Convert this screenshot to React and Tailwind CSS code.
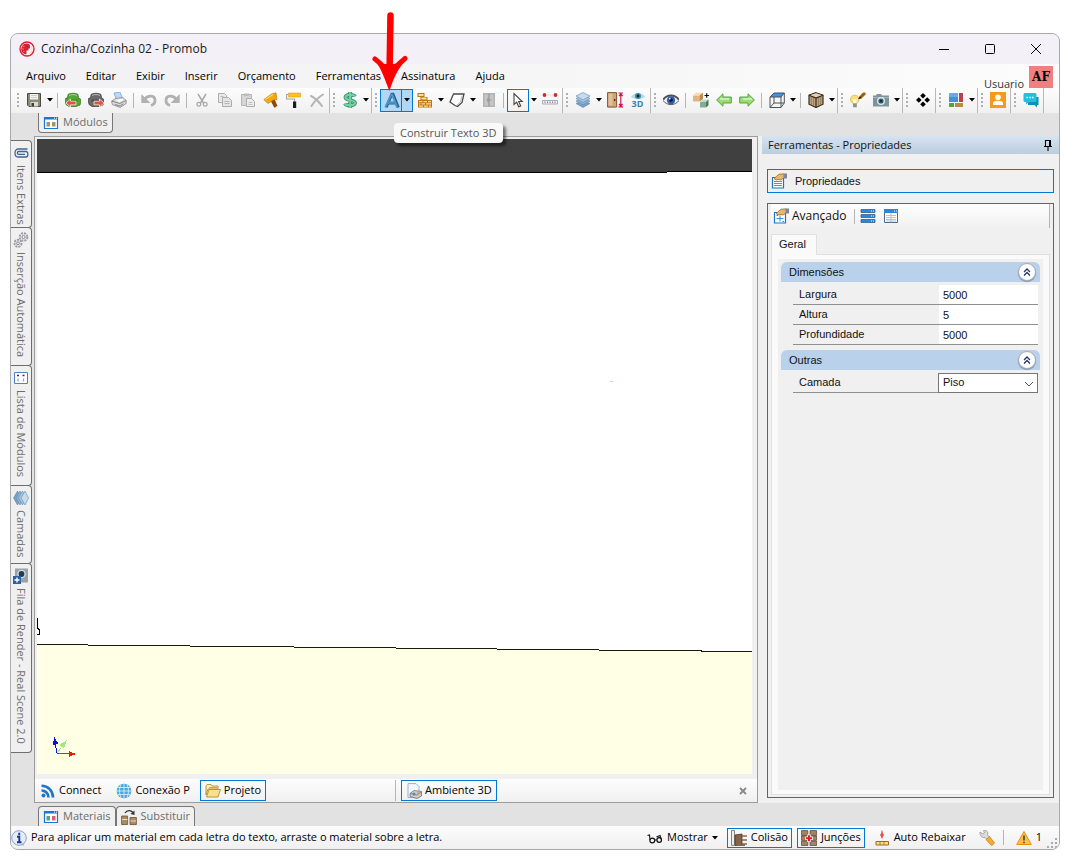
import React, { useState } from 'react'

const menus = ['Arquivo', 'Editar', 'Exibir', 'Inserir', 'Orçamento', 'Ferramentas', 'Assinatura', 'Ajuda']

/* ---------- icons ---------- */

function Svg({ children, box = '0 0 16 16', className = 'h-4 w-4' }) {
  return (
    <svg viewBox={box} className={`shrink-0 ${className}`} fill="none" aria-hidden="true">
      {children}
    </svg>
  )
}

const Caret = () => (
  <Svg box="0 0 6 4" className="h-[4px] w-[6px]">
    <path d="M0 0h6L3 3.6z" fill="#000" />
  </Svg>
)

const LogoIcon = () => (
  <Svg>
    <circle cx="8" cy="8" r="7" fill="#fff" stroke="#d9202e" strokeWidth="1.4" />
    <path d="M8 2.500A5.500 5.500 0 0 0 5.500 13l2 .5V9.500h2V7.500h1.500V4.500L10 3z" fill="#d9202e" />
    <path d="M3.500 5.500h2M3 8h2M4 10.500h1.500" stroke="#f5a5aa" strokeWidth=".7" />
    <path d="M12.500 5a6 6 0 0 1-3 8" stroke="#f3b5ba" strokeWidth=".8" />
  </Svg>
)

const SaveIcon = () => (
  <Svg>
    <path d="M1.500 1.500h13v13H3l-1.500-1.500z" fill="#8b8b78" stroke="#4a4a44" />
    <path d="M4 2h8v5.500H4z" fill="#f4f4f0" />
    <path d="M5 3.500h6M5 5.500h6" stroke="#c4c4bc" strokeWidth=".8" />
    <path d="M4.500 10h7.500v4.500H4.500z" fill="#d9d9cf" />
    <path d="M5.500 11h2.500v3.500H5.500z" fill="#3f3f3a" />
  </Svg>
)

function ChairIcon({ body, dark, flip }) {
  return (
    <Svg>
      <path d="M3 2.500C5 .8 11 .8 13 2.500l.6 4H15l1 2-1 4.500-4 1.500H4L1 12.500 0 7.500l1-1.500h1.500z" fill={body} stroke={dark} strokeWidth=".7" />
      <path d="M3.500 7.500h9V10h-9z" fill={dark} opacity=".6" />
      <path d="M4 3.500c2-1.200 6-1.200 8 0" stroke="#fff" opacity=".5" strokeWidth="1" />
      <path
        transform={flip ? 'translate(17 0) scale(-1 1)' : undefined}
        d="M1 11l4.500-4v2.200H11v3.600H5.500V15z"
        fill="#e2523f"
        stroke="#fff"
        strokeWidth=".7"
      />
    </Svg>
  )
}

const PrinterIcon = () => (
  <Svg>
    <path d="M3 1l6-.8 2.500 6L5.500 8z" fill="#bcd8f5" stroke="#6c9ccf" strokeWidth=".7" />
    <path d="M.7 9l4-2.500 7-1 3.500 3v3l-6 4-8-3z" fill="#dcdcdc" stroke="#7a7a7a" strokeWidth=".7" />
    <path d="M.7 9l8 2.500 6.500-3M4 12.500l5 1.500 3.500-2.200" stroke="#6e6e6e" strokeWidth=".8" />
    <path d="M4.500 8l6.500-1 1.500 1-4 2z" fill="#fff" />
  </Svg>
)

function UndoIcon({ flip }) {
  return (
    <Svg>
      <g transform={flip ? 'translate(16 0) scale(-1 1)' : undefined}>
        <path d="M3.500 7.500C6.500 3 14 2.800 14 8.500c0 2.500-1.500 4.200-4 5" stroke="#b1b1b1" strokeWidth="2.800" />
        <path d="M.3 2v9h9z" fill="#b1b1b1" />
      </g>
    </Svg>
  )
}

const CutIcon = () => (
  <Svg>
    <path d="M4 2l5.500 9M12 2L6.500 11" stroke="#a9a9a9" strokeWidth="1.500" />
    <circle cx="4.800" cy="12.300" r="1.900" stroke="#a9a9a9" strokeWidth="1.200" />
    <circle cx="11.200" cy="12.300" r="1.900" stroke="#a9a9a9" strokeWidth="1.200" />
  </Svg>
)

const CopyIcon = () => (
  <Svg>
    <path d="M1.500 1.500h6l2 2v7h-8z" fill="#e9e9e9" stroke="#adadad" />
    <path d="M5.500 5.500h6l3 3v6h-9z" fill="#e4e4e4" stroke="#adadad" />
    <path d="M7.500 9.500h5M7.500 11.500h5M3.500 4.500h3" stroke="#b9b9b9" />
  </Svg>
)

const PasteIcon = () => (
  <Svg>
    <path d="M1.500 2.500h10v11h-10z" fill="#d6d6d6" stroke="#b4b4b4" />
    <path d="M4 1.500h5V4H4z" fill="#bcbcbc" />
    <path d="M6.500 6.500h5l3 3v5h-8z" fill="#ededed" stroke="#adadad" />
    <path d="M8.500 10.500h4M8.500 12.500h4" stroke="#c2c2c2" />
  </Svg>
)

const HammerIcon = () => (
  <Svg>
    <path d="M7 7.500l4-1.500 3.500 8-3.200 1.700z" fill="#8b4b0d" />
    <path d="M.8 7.500L8.500 2 13 .8l1 6.700-3.500.5L5 11.500z" fill="#f1a90f" stroke="#b27405" strokeWidth=".6" />
    <path d="M2 7.500L10 2.500" stroke="#ffd66b" strokeWidth="1.200" />
  </Svg>
)

const RollerIcon = () => (
  <Svg>
    <path d="M2.500 1h12v4h-12z" fill="#fdc31d" stroke="#d59505" strokeWidth=".5" />
    <path d="M2 2.500H.6v4.500h8v3" stroke="#a3a3a3" strokeWidth="1.100" />
    <path d="M7 9.500h3.200V16H7z" fill="#1c1c1c" />
  </Svg>
)

const DeleteIcon = () => (
  <Svg>
    <path d="M2 4c4 2 8 6 11 10M14 2.500C9 5.500 5 10 2.500 14" stroke="#b4b4b4" strokeWidth="2" strokeLinecap="round" />
  </Svg>
)

const DollarIcon = () => (
  <Svg>
    <path d="M13 4.500C12 2.500 3.500 2 3.500 5.500S13 7.500 13 10.800 4 14 3 11.500M8.200 0v16" stroke="#2f8c62" strokeWidth="3.800" />
    <path d="M13 4.500C12 2.500 3.500 2 3.500 5.500S13 7.500 13 10.800 4 14 3 11.500M8.200 0v16" stroke="#74cfa2" strokeWidth="2.200" />
  </Svg>
)

const LetterIcon = () => (
  <Svg className="h-[17px] w-[17px]">
    <path d="M3 14.500L8.300 2h1.200L14.500 14.500M5.500 10.500H12" stroke="#27618f" strokeWidth="2.600" />
    <path d="M2.200 14.500L7.700 2.500h1L13.300 14.500M4.500 10h7" stroke="#4a92c8" strokeWidth="1.900" />
  </Svg>
)

const BrickIcon = () => (
  <Svg>
    <path d="M.5 1h7v4h-7zM3.500 5h7v3h-7zM1 8h14v7.500H1z" fill="#b87614" />
    <path d="M1.500 2h5v2h-5zM4.500 5.500h5v2h-5zM2 9h3.500v1.300H2zM6.500 9H10v1.300H6.500zM11 9h3v1.300h-3zM2 11.300h1.500v1.300H2zM4.500 11.300H8v1.300H4.500zM9 11.300h5v1.300H9zM2 13.500h4v1.200H2zM7 13.500h4v1.200H7zM12 13.500h2v1.200h-2z" fill="#fde18f" />
  </Svg>
)

const PolygonIcon = () => (
  <Svg>
    <path d="M4.500 2H15l-2 8.500-4.500 4L6 13.500 1 10z" fill="#fff" stroke="#4a4a4a" strokeWidth="1.300" />
    <path d="M13 3.500l-1.500 6.500L8 13" stroke="#aaa" strokeWidth=".8" />
  </Svg>
)

const CabinetIcon = () => (
  <Svg>
    <path d="M2 1h12v14H2z" fill="#b3b3b3" />
    <path d="M3.500 2.500h4v11h-4zM8.500 2.500h4v11h-4z" fill="#c6c6c6" />
    <path d="M8 1.500v13M5.500 8h5M7 5.500v5" stroke="#969696" />
  </Svg>
)

const CursorIcon = () => (
  <Svg>
    <path d="M4 1.500v11l2.700-2.300 2 4.600 2-.9-2-4.400h3.500z" fill="#fff" stroke="#444" strokeWidth="1.100" />
  </Svg>
)

const MeasureIcon = () => (
  <Svg>
    <circle cx="2.500" cy="3" r="1.900" fill="#c9302a" />
    <circle cx="13.500" cy="3" r="1.900" fill="#c9302a" />
    <path d="M5.500 3h1m1 0h1m1 0h1" stroke="#ccc" />
    <path d="M.5 8.500h15V12H.5z" fill="#f0f0f5" stroke="#aaa9b8" />
    <path d="M3 9.500v1.500M5.500 9.500v1.500M8 9.500v1.500M10.500 9.500v1.500M13 9.500v1.500" stroke="#777" strokeWidth=".9" />
  </Svg>
)

function LayersIcon({ turned }) {
  return (
    <Svg>
      <g transform={turned ? 'rotate(90 8 8)' : undefined} stroke="#5f87ad" strokeWidth=".6">
        <path d="M1 11.500L8 8l7 3.500L8 15.500z" fill="#7ba0c4" />
        <path d="M1 9L8 5.500 15 9l-7 4z" fill="#90b2d2" />
        <path d="M1 6.500L8 3l7 3.500-7 4z" fill="#a9c6e0" />
        <path d="M1 4L8 .5 15 4 8 8z" fill="#c5dbee" />
      </g>
    </Svg>
  )
}

const DoorIcon = () => (
  <Svg>
    <path d="M.6.600h9v14.500h-9z" fill="#cfa676" stroke="#7b5833" />
    <path d="M1.500 1.500h4v12h-4z" fill="#e8cda8" opacity=".7" />
    <circle cx="7.700" cy="8" r=".9" fill="#3d2a18" />
    <path d="M11.500 1H16M11.500 14.800H16M13.800 1.500v13M12 4l1.800-2L15.600 4M12 12l1.800 2 1.800-2" stroke="#d0124f" strokeWidth="1.200" />
  </Svg>
)

const Eye3dIcon = () => (
  <span className="flex flex-col items-center">
    <Svg box="0 0 14 8" className="h-2 w-[14px]">
      <path d="M0 4.500C3 0 11 0 14 4.500 11 8 3 8 0 4.500z" fill="#b7d9e8" />
      <circle cx="7" cy="4" r="3" fill="#3a88b0" />
      <circle cx="7" cy="4" r="1.400" fill="#10242f" />
    </Svg>
    <span className="text-[9px] leading-[8px] font-bold text-[#3f7fae]">3D</span>
  </span>
)

const EyeIcon = () => (
  <Svg>
    <path d="M0 8.500C3.500 2.500 12 2 16 8.500 12 14 4 14 0 8.500z" fill="#eef0f5" stroke="#5b5b60" strokeWidth="1" />
    <path d="M.3 7.500C4 2 12 2 15.700 7.500" stroke="#4e4e55" strokeWidth="1.800" />
    <circle cx="8" cy="8.300" r="4" fill="#2f5ba8" />
    <circle cx="8" cy="8" r="1.800" fill="#0c1638" />
    <circle cx="6.800" cy="6.700" r=".9" fill="#dbe8ff" />
  </Svg>
)

const CubesIcon = () => (
  <Svg>
    <path d="M0 3.500h6.500V9.500H0z" fill="#e0b67c" />
    <path d="M0 3.500L3 .8h7l-3.500 2.700z" fill="#f5dcb2" />
    <path d="M6.500 3.500L10 .8V7L6.500 9.500z" fill="#b98c50" />
    <path d="M7 10h6v5.500H7z" fill="#86ad93" />
    <path d="M7 10L9.500 7.500h6L13 10z" fill="#bfdac8" />
    <path d="M13 10l2.500-2.500v5.700L13 15.500z" fill="#4f7a61" />
    <path d="M11.500 3.500H16M13.700 1.300v4.500" stroke="#111" strokeWidth="1.200" />
  </Svg>
)

function ArrowIcon({ flip }) {
  return (
    <Svg>
      <path
        transform={flip ? 'translate(16 0) scale(-1 1)' : undefined}
        d="M.6 8L7 1.800V5h8.300v6H7v3.200z"
        fill="#9bdb77"
        stroke="#4c9c34"
        strokeWidth=".9"
      />
      <path d="M4 7h9" stroke="#d6f3c6" strokeWidth="1.500" />
    </Svg>
  )
}

const WireCubeIcon = () => (
  <Svg>
    <path d="M5 1h10.300L12 5H1z" fill="#3d93ea" />
    <path d="M1 5h11v10.500H1zM5 1h10.300v10L12 15.500M1 5l4-4M12 5l3.300-4M5 5v6h10M5 11l-4 4.500" stroke="#4d5257" strokeWidth="1" />
  </Svg>
)

const CrateIcon = () => (
  <Svg>
    <path d="M8 .7l7 2.500v9L8 15.500 1 12.200v-9z" fill="#c4a883" stroke="#34291d" strokeWidth="1.200" />
    <path d="M1.600 3.200L8 1.200l6.400 2L8 5.300z" fill="#e3d0b2" />
    <path d="M1 3.200L8 6l7-2.800M8 6v9.500" stroke="#34291d" strokeWidth="1.200" />
    <path d="M3.300 5v7.500M5.600 6v7.500M10.400 6v7.500M12.700 5v7.500" stroke="#7b6345" strokeWidth=".7" />
  </Svg>
)

const BulbIcon = () => (
  <Svg>
    <circle cx="4.800" cy="7.500" r="4.300" fill="#fbe27b" stroke="#d8b23c" strokeWidth=".7" />
    <path d="M3 11.500h3.800v3.700H3z" fill="#8e8e93" />
    <path d="M3.300 7l1.500 1 1.500-1v4H3.300z" fill="#fff" />
    <path d="M9.500 4.500L12 1.500C13 .3 15.500.3 15.700 1.500S14 4 13 5l-2 1.500z" fill="#a8590c" />
    <path d="M8 7.300l1.800-3 2 2z" fill="#23170c" />
  </Svg>
)

const CameraIcon = () => (
  <Svg>
    <path d="M0 3.500h3L4 2h4l1 1.500h7v11H0z" fill="#7e9499" />
    <path d="M0 5h16v1H0z" fill="#a5b6ba" />
    <circle cx="8" cy="9" r="4" fill="#dfe7ea" />
    <circle cx="8" cy="9" r="2.600" fill="#315b78" />
    <circle cx="8" cy="9" r="1.100" fill="#0f2230" />
  </Svg>
)

const DiamondsIcon = () => (
  <Svg>
    <path d="M8 1l2.800 2.800L8 6.600 5.200 3.800zM8 9.400l2.800 2.800L8 15l-2.800-2.800zM3.800 5.200L6.600 8l-2.800 2.800L1 8zM12.200 5.200L15 8l-2.800 2.800L9.400 8z" fill="#000" />
  </Svg>
)

const TilesIcon = () => (
  <Svg>
    <path d="M1 1h9v9H1z" fill="#4a8fd4" />
    <path d="M1 1h9v4H1z" fill="#6aa9e4" />
    <path d="M11 1h4v9h-4z" fill="#b8434c" />
    <path d="M1 11h5v4H1z" fill="#5da130" />
    <path d="M7 11h8v4H7z" fill="#b98b3c" />
  </Svg>
)

const PersonIcon = () => (
  <Svg>
    <path d="M0 0h16v16H0z" fill="#f8981d" />
    <circle cx="8" cy="5.200" r="2.800" fill="#fff" />
    <path d="M3 13V11c0-3 10-3 10 0v2z" fill="#fff" />
  </Svg>
)

const ChatIcon = () => (
  <Svg>
    <path d="M5 5h10.500v8H14v2.500L11.500 13H5z" fill="#0f93b5" />
    <path d="M1.500 1h11l1 1v7l-1 1H6l-3 2.500V10H1.500l-1-1V2z" fill="#22bfe0" />
    <path d="M3.500 5.500h1.500M6.300 5.500h1.500M9 5.500h1.500" stroke="#fff" strokeWidth="1.500" />
  </Svg>
)

const PanelIcon = ({ a, b }) => (
  <Svg>
    <path d="M1.500 2.500h13v11h-13z" fill="#fff" stroke="#1976d2" strokeWidth="1.200" />
    <path d="M1 2h14v2.500H1z" fill="#1976d2" />
    <path d="M11 3.200h1m1 0h1" stroke="#fff" />
    <path d="M3.500 7h3.500v4.500H3.500z" fill={a} />
    <path d="M9 7h3.500v4.500H9z" fill={b} />
  </Svg>
)

const ClipIcon = () => (
  <Svg>
    <path d="M14.500 4H5C1 4 1 12 5 12h8c2.500 0 2.500-5.500 0-5.500H5.500C4 6.500 4 9.300 5.500 9.300H12" stroke="#41658f" strokeWidth="1.300" />
  </Svg>
)

const GearsIcon = () => (
  <Svg>
    <circle cx="10.500" cy="5" r="3.800" stroke="#9d9ba6" strokeWidth="2" strokeDasharray="2 1" />
    <circle cx="10.500" cy="5" r="1.600" stroke="#8b8994" />
    <circle cx="5" cy="11.300" r="3.500" stroke="#9d9ba6" strokeWidth="2" strokeDasharray="2 1" />
    <circle cx="5" cy="11.300" r="1.400" stroke="#8b8994" />
  </Svg>
)

const ListIcon = () => (
  <Svg>
    <path d="M1.500 2.500h13v11h-13z" fill="#fff" stroke="#4d83c4" />
    <path d="M4 5.500h2M9.500 5.500h2" stroke="#3d3322" strokeWidth="1.600" />
    <path d="M5 8.500v3M10.500 8.500v3" stroke="#7fa9dd" strokeWidth="1.200" />
  </Svg>
)

const RenderIcon = () => (
  <Svg>
    <path d="M2 .500h13v14H2z" fill="#97a4a8" />
    <circle cx="8.500" cy="6" r="4.300" fill="#d5dde0" />
    <circle cx="8.500" cy="6" r="2.900" fill="#1f3c5a" />
    <path d="M0 8h8v8H0z" fill="#2b62a4" />
    <path d="M1.500 12h5M4 9.500v5" stroke="#fff" strokeWidth="1.400" />
  </Svg>
)

const RssIcon = () => (
  <Svg>
    <circle cx="3.500" cy="12.500" r="2" fill="#1c76c9" />
    <path d="M1.500 7.500c4 0 7 3 7 7M1.500 2.800c6.500 0 11.500 5 11.500 11.700" stroke="#1c76c9" strokeWidth="2.600" />
  </Svg>
)

const GlobeIcon = () => (
  <Svg>
    <circle cx="8" cy="8" r="7.300" fill="#4aa6dd" />
    <path d="M1 8h14M2 4.500h12M2 11.500h12M8 1v14M5 1.500c-2 4-2 9 0 13M11 1.500c2 4 2 9 0 13" stroke="#d5eefb" strokeWidth=".9" />
  </Svg>
)

const FolderIcon = () => (
  <Svg>
    <path d="M1 3l1-1.500h4L7 3h6v3H3l-2 6z" fill="#fdf0b0" stroke="#a98322" strokeWidth=".8" />
    <path d="M4 4.500h8" stroke="#7fb0df" />
    <path d="M1.500 14L4 6.500h11.500L13 14z" fill="#fbe08a" stroke="#a98322" strokeWidth=".8" />
  </Svg>
)

const SceneIcon = () => (
  <Svg>
    <path d="M2 .600h8l3 3v11H2z" fill="#f2f7fd" stroke="#8aa9cf" strokeWidth=".9" />
    <path d="M4 10.500l4-3 7.500 1v4.500l-4.500 2.500-7-2z" fill="#d0cdc7" stroke="#6a6761" strokeWidth=".7" />
    <path d="M4 10.500l7 1.500 4.500-3" stroke="#6a6761" strokeWidth=".7" />
    <circle cx="8" cy="11" r="1.500" fill="#5a88c0" />
    <path d="M11 10h3" stroke="#d49b37" strokeWidth="1.200" />
  </Svg>
)

const SwapIcon = () => (
  <Svg>
    <path d="M.6 7h6v8.500h-6zM9 8.500h6.400v7H9z" fill="#a98b66" stroke="#6e5335" strokeWidth=".8" />
    <path d="M1 10.500h5.500M9.500 12h5.500" stroke="#ecdcc2" />
    <path d="M4 4c2-3 6-3 8-.5" stroke="#333" strokeWidth="1.300" />
    <path d="M13.500 1.500v4.500L9.500 5z" fill="#333" />
  </Svg>
)

const InfoIcon = () => (
  <Svg>
    <circle cx="8" cy="8" r="7.300" fill="#e3ecf8" stroke="#8aa2c8" strokeWidth="1" />
    <path d="M14 12L12.500 15.800 9.500 14.800z" fill="#9fb4d4" />
    <path d="M8.200 2.800v2.400M6 6.800h2.300V12M6 12.300h4.500" stroke="#163b94" strokeWidth="1.900" />
  </Svg>
)

const GlassesIcon = () => (
  <Svg>
    <circle cx="5.300" cy="10.500" r="2.400" stroke="#111" strokeWidth="1.200" />
    <circle cx="12.200" cy="10" r="2.300" stroke="#111" strokeWidth="1.200" />
    <path d="M3 10L2.500 5 .5 5.500M7.700 10h2M14.200 9L13 5.500 9.500 7" stroke="#111" strokeWidth="1.100" />
  </Svg>
)

const CollisionIcon = () => (
  <Svg>
    <path d="M.500.600h3v14.800h-3z" fill="#eee" stroke="#777" strokeWidth=".9" />
    <path d="M4 5l7-1v11.500H4z" fill="#8a6247" stroke="#50351f" strokeWidth=".8" />
    <path d="M11 6h5M11 10h5M11 14h5M6 15.500h8" stroke="#87684f" strokeWidth="1.300" />
  </Svg>
)

const JointIcon = () => (
  <Svg>
    <path d="M.500.600h6.300v4.800H.500zM9 .600h6.500v4.800H9zM.500 6h6.300v4.300H.500zM9 6h6.500v4.300H9zM.500 11h6.300v4.500H.500zM9 11h6.500v4.500H9z" fill="#a08468" stroke="#5d4026" strokeWidth=".7" />
    <path d="M8 4.500v7.500M4.300 8.200h7.500" stroke="#fff" strokeWidth="3.400" />
    <path d="M8 5.200v6M5 8.200h6" stroke="#f0141c" strokeWidth="2" />
  </Svg>
)

const LowerIcon = () => (
  <Svg>
    <path d="M8 .500v3M8 6v2.500" stroke="#e03b3b" strokeWidth="1" />
    <path d="M8 2l2 3-2 3-2-3z" fill="#e34f4f" />
    <path d="M2 11.500h12.500v3.500H2z" fill="#f9dc8c" stroke="#9d6c18" strokeWidth="1" />
    <path d="M6 11.500V15M10 11.500V15" stroke="#9d6c18" strokeWidth=".8" />
  </Svg>
)

const WrenchIcon = () => (
  <Svg>
    <path d="M1 2l3 2 1.500-1L4.500.500C8-.300 9.500 2.500 8.500 5L11 7.500 8 9.500 6 7.500C3 8 .500 5.500 1 2z" fill="#dcdcdc" stroke="#8c8c8c" strokeWidth=".7" />
    <path d="M7 9.500L10.500 6.500l5 6.500-2.800 2.700z" fill="#f7ac2e" stroke="#c27a12" strokeWidth=".7" />
  </Svg>
)

const WarningIcon = () => (
  <Svg>
    <path d="M8 1.500L15.300 14.500H.7z" fill="#fbc14a" stroke="#e49214" strokeWidth="1" strokeLinejoin="round" />
    <path d="M8 5.500v5M8 11.800v1.500" stroke="#3d3d3d" strokeWidth="1.500" />
  </Svg>
)

const HandSheetIcon = ({ plus }) => (
  <Svg>
    <path d="M1.500 4.500h11v10.500h-11z" fill="#fff" stroke="#1976c9" strokeWidth="1.200" />
    {plus ? (
      <path d="M3.500 10.500h7M7 7.500v6M3.500 7.500h1.500M9.500 13.500H11" stroke="#3a8ad5" strokeWidth="1" />
    ) : (
      <path d="M3 8.500h8M3 10.500h8M3 12.500h8" stroke="#3a8ad5" strokeWidth=".9" />
    )}
    <path d="M3 5.500L8 1.200l5-.4V5L10 7 7 6.500 5 7z" fill="#e8b869" stroke="#8a5f24" strokeWidth=".7" />
    <path d="M13 .500h3v5h-3z" fill="#7c83a3" />
  </Svg>
)

const RowsIcon = () => (
  <Svg>
    <path d="M1 1.500h14v3H1zM1 6.500h14v3H1zM1 11.500h14v3H1z" fill="#2788e0" stroke="#345272" strokeWidth=".7" />
    <path d="M11 3h1m1 0h1M11 8h1m1 0h1M11 13h1m1 0h1" stroke="#fff" />
  </Svg>
)

const GridIcon = () => (
  <Svg>
    <path d="M1.500 1.500h13v13h-13z" fill="#fff" stroke="#4d6b8c" />
    <path d="M1 1h14v4H1z" fill="#2788e0" />
    <path d="M11 3h1m1 0h1" stroke="#fff" />
    <path d="M3 7.500h10M3 9.500h10M3 11.500h10M3 13h10M8 5v9.500" stroke="#a9b4c0" strokeWidth=".8" />
  </Svg>
)

const PinIcon = () => (
  <Svg box="0 0 10 12" className="h-3 w-[10px]">
    <path d="M2.500 1.500h4.500v6H2.500zM1 7.500h8M5 7.500V12" stroke="#000" strokeWidth="1.100" />
    <path d="M6 1h2v6.500H6z" fill="#000" />
  </Svg>
)

/* ---------- toolbar ---------- */

const Sep = () => <span className="mx-[3px] h-[15px] w-px shrink-0 bg-[#b5b5b5]" />

function ToolButton({ label, children }) {
  return (
    <button type="button" aria-label={label} className="flex h-[23px] w-[23px] shrink-0 items-center justify-center">
      {children}
    </button>
  )
}

function MoreButton({ label }) {
  return (
    <button type="button" aria-label={label} className="flex h-[23px] w-[9px] shrink-0 items-center justify-center">
      <Caret />
    </button>
  )
}

function Strip({ children }) {
  return (
    <div className="flex shrink-0 items-center border-r border-[#b8b8b8] pr-px pb-px pl-[3px]">
      <span className="mr-[3px] flex flex-col gap-[2px]">
        <i className="h-[2px] w-[2px] bg-[#b0b0b0]" />
        <i className="h-[2px] w-[2px] bg-[#b0b0b0]" />
        <i className="h-[2px] w-[2px] bg-[#b0b0b0]" />
        <i className="h-[2px] w-[2px] bg-[#b0b0b0]" />
      </span>
      {children}
    </div>
  )
}

function Toolbar() {
  return (
    <div className="flex h-[25px] bg-linear-to-b from-[#fdfdfd] to-[#f0f0f0] pl-[3px]">
      <Strip>
        <ToolButton label="Salvar"><SaveIcon /></ToolButton>
        <MoreButton label="Opções de salvar" />
        <Sep />
        <ToolButton label="Abrir"><ChairIcon body="#55a832" dark="#2c6d17" /></ToolButton>
        <ToolButton label="Fechar"><ChairIcon body="#6b6b6b" dark="#3a3a3a" flip /></ToolButton>
        <ToolButton label="Imprimir"><PrinterIcon /></ToolButton>
        <Sep />
        <ToolButton label="Desfazer"><UndoIcon /></ToolButton>
        <ToolButton label="Refazer"><UndoIcon flip /></ToolButton>
        <Sep />
        <ToolButton label="Recortar"><CutIcon /></ToolButton>
        <ToolButton label="Copiar"><CopyIcon /></ToolButton>
        <ToolButton label="Colar"><PasteIcon /></ToolButton>
        <ToolButton label="Martelo"><HammerIcon /></ToolButton>
        <ToolButton label="Pintar"><RollerIcon /></ToolButton>
        <ToolButton label="Excluir"><DeleteIcon /></ToolButton>
      </Strip>
      <Strip>
        <ToolButton label="Preço"><DollarIcon /></ToolButton>
        <MoreButton label="Opções de preço" />
      </Strip>
      <Strip>
        <div className="relative flex shrink-0">
          <button
            type="button"
            aria-describedby="tip"
            aria-label="Texto 3D"
            className="flex h-[23px] w-[22px] items-center justify-center border border-[#0078d7] bg-[#b3d7f3]"
          >
            <LetterIcon />
          </button>
          <button
            type="button"
            aria-label="Opções de texto"
            className="flex h-[23px] w-[11px] items-center justify-center border border-l-0 border-[#0078d7] bg-[#b3d7f3]"
          >
            <Caret />
          </button>
          <div
            id="tip"
            role="tooltip"
            className="absolute top-[34px] left-[14px] z-10 rounded-sm bg-[#f9f9f9] px-[6px] text-[11px] leading-[20px] whitespace-nowrap text-[#575757] shadow-[3px_3px_3px_rgba(0,0,0,0.5)]"
          >
            Construir Texto 3D
          </div>
        </div>
        <ToolButton label="Paredes"><BrickIcon /></ToolButton>
        <MoreButton label="Opções de paredes" />
        <ToolButton label="Polígono"><PolygonIcon /></ToolButton>
        <MoreButton label="Opções de polígono" />
        <ToolButton label="Armário"><CabinetIcon /></ToolButton>
        <Sep />
        <button
          type="button"
          aria-label="Selecionar"
          className="flex h-[23px] w-[22px] shrink-0 items-center justify-center border border-[#0078d7]"
        >
          <CursorIcon />
        </button>
        <MoreButton label="Opções de seleção" />
        <ToolButton label="Medir"><MeasureIcon /></ToolButton>
      </Strip>
      <Strip>
        <ToolButton label="Camadas"><LayersIcon /></ToolButton>
        <MoreButton label="Opções de camadas" />
        <ToolButton label="Portas"><DoorIcon /></ToolButton>
        <ToolButton label="Vista"><Eye3dIcon /></ToolButton>
      </Strip>
      <Strip>
        <ToolButton label="Visualizar"><EyeIcon /></ToolButton>
        <Sep />
        <ToolButton label="Agrupar"><CubesIcon /></ToolButton>
        <ToolButton label="Anterior"><ArrowIcon /></ToolButton>
        <ToolButton label="Próximo"><ArrowIcon flip /></ToolButton>
        <Sep />
        <ToolButton label="Faces"><WireCubeIcon /></ToolButton>
        <MoreButton label="Opções de faces" />
        <Sep />
        <ToolButton label="Caixa"><CrateIcon /></ToolButton>
        <MoreButton label="Opções de caixa" />
      </Strip>
      <Strip>
        <ToolButton label="Luz"><BulbIcon /></ToolButton>
        <ToolButton label="Câmera"><CameraIcon /></ToolButton>
        <MoreButton label="Opções de câmera" />
      </Strip>
      <Strip>
        <ToolButton label="Módulos"><DiamondsIcon /></ToolButton>
      </Strip>
      <Strip>
        <ToolButton label="Janelas"><TilesIcon /></ToolButton>
        <MoreButton label="Opções de janelas" />
      </Strip>
      <Strip>
        <ToolButton label="Conta"><PersonIcon /></ToolButton>
      </Strip>
      <Strip>
        <ToolButton label="Conversa"><ChatIcon /></ToolButton>
      </Strip>
    </div>
  )
}

/* ---------- frame parts ---------- */

function TitleBar() {
  return (
    <header className="flex h-[30px] items-center bg-[#f3f0f8] pl-2">
      <LogoIcon />
      <h1 className="ml-[6px] text-[12px] text-[#1b1b1b]">Cozinha/Cozinha 02 - Promob</h1>
      <div className="ml-auto flex">
        <button type="button" aria-label="Minimizar" className="flex h-7 w-[46px] items-center justify-center">
          <Svg box="0 0 10 10" className="h-[10px] w-[10px]"><path d="M0 5.500h10" stroke="#000" /></Svg>
        </button>
        <button type="button" aria-label="Maximizar" className="flex h-7 w-[46px] items-center justify-center">
          <Svg box="0 0 10 10" className="h-[10px] w-[10px]"><rect x=".5" y=".5" width="9" height="9" rx="1" stroke="#000" /></Svg>
        </button>
        <button type="button" aria-label="Fechar" className="flex h-7 w-[46px] items-center justify-center">
          <Svg box="0 0 10 10" className="h-[10px] w-[10px]"><path d="M0 0l10 10M10 0L0 10" stroke="#000" /></Svg>
        </button>
      </div>
    </header>
  )
}

function MenuBar() {
  return (
    <nav className="flex h-6 bg-linear-to-r from-[#f1f0f2] to-[#fcfcfc] pl-[15px]">
      <ul className="flex items-center gap-5">
        {menus.map((m) => (
          <li key={m}>
            <button type="button">{m}</button>
          </li>
        ))}
      </ul>
      <div className="mr-[6px] ml-auto flex items-start gap-[5px]">
        <span className="pt-3 leading-4 text-[#333]">Usuario</span>
        <span className="mt-[2px] h-6 w-6 bg-[#f08080] text-center font-[DejaVu_Serif,serif] text-[12px] leading-[22px] font-bold">
          AF
        </span>
      </div>
    </nav>
  )
}

function SideTab({ icon, children, pad = 'pb-2' }) {
  return (
    <button
      type="button"
      className={`-mt-px flex w-[21px] flex-col items-center gap-1 rounded-r-[4px] border border-l-0 border-[#6e6e6e] bg-[#f0f0f0] pt-1 leading-[20px] text-[#6d6d6d] ${pad}`}
    >
      {icon}
      <span className="whitespace-nowrap [writing-mode:vertical-rl]">{children}</span>
    </button>
  )
}

function Scene() {
  return (
    <svg viewBox="0 0 715 635" preserveAspectRatio="none" className="min-h-0 w-full flex-1 bg-white" shapeRendering="crispEdges" role="img" aria-label="Cena 3D">
      <path d="M0 0h715v32H630v1H0z" fill="#404040" />
      <path d="M0 33.500h630M630 32.500h85" stroke="#000" />
      <path d="M0 505.500L715 512.500V635H0z" fill="#ffffe5" />
      <path d="M0 505.500L715 512.500" stroke="#1a1a08" />
      <path d="M.5 479v10l2 2v4l-2 1" stroke="#000" fill="none" />
      <path d="M573 242.500h3" stroke="#f6c3cb" />
      <path d="M20 614l-2-10" stroke="#1010e0" />
      <path d="M15.500 606l2-8 4 7z" fill="#1010e0" />
      <path d="M20 614.500h14" stroke="#f21b05" />
      <path d="M32 612l7 3-7 3z" fill="#f21b05" />
      <path d="M20 614l4-5" stroke="#9bec80" />
      <path d="M22 606l8-5-3 8z" fill="#9bec80" />
    </svg>
  )
}

function Group({ title, children }) {
  return (
    <section>
      <div className="flex h-5 items-center justify-between rounded-t-md bg-[#b9d1ea] pr-1 pl-2">
        <h3>{title}</h3>
        <button
          type="button"
          aria-label={`Recolher ${title}`}
          className="flex h-[18px] w-[18px] items-center justify-center rounded-full border border-[#a3abbd] bg-white shadow-[0_1px_1px_rgba(0,0,0,0.3)]"
        >
          <Svg box="0 0 8 8" className="h-2 w-2">
            <path d="M1 4l3-3 3 3M1 7.500l3-3 3 3" stroke="#23366b" strokeWidth="1.300" />
          </Svg>
        </button>
      </div>
      <div className="pt-[3px] pr-[2px] pb-[5px] pl-3">{children}</div>
    </section>
  )
}

function Field({ id, label, value }) {
  const [v, setV] = useState(value)
  return (
    <div className="flex h-5 items-center border-b border-[#909090] pl-[6px]">
      <label htmlFor={id} className="flex-1">{label}</label>
      <input id={id} value={v} onChange={(e) => setV(e.target.value)} className="h-[19px] w-[99px] bg-white px-1 outline-none" />
    </div>
  )
}

function Properties() {
  return (
    <aside className="flex w-[301px] shrink-0 flex-col bg-[#f0f0f0] pb-[5px] pl-1 font-[Liberation_Sans,Arial,sans-serif] text-[#111]">
      <div className="flex h-[18px] items-center justify-between bg-linear-to-b from-[#d6e3f1] to-[#bccddd] pr-[6px] pl-[6px] font-[Open_Sans,sans-serif]">
        <h2>Ferramentas - Propriedades</h2>
        <button type="button" aria-label="Fixar painel"><PinIcon /></button>
      </div>
      <button type="button" className="mx-[5px] mt-[15px] flex h-6 items-center gap-2 border border-[#0078d7] px-[3px]">
        <HandSheetIcon />
        Propriedades
      </button>
      <div className="mx-[5px] mt-[10px] flex flex-1 flex-col border border-[#646464] px-[3px] pb-[2px]">
        <div className="flex h-6 items-center border-r border-[#b5b5b5] bg-linear-to-b from-white to-[#f0f0f0] pl-[2px] font-[Open_Sans,sans-serif] text-[12px]">
          <button type="button" className="flex items-center gap-[3px]">
            <HandSheetIcon plus />
            Avançado
          </button>
          <span className="mr-[5px] ml-[7px] h-[15px] w-px bg-[#b5b5b5]" />
          <button type="button" aria-label="Linhas"><RowsIcon /></button>
          <button type="button" aria-label="Grade" className="ml-[7px]"><GridIcon /></button>
        </div>
        <div role="tablist" className="relative z-10 mt-[6px] -mb-px flex">
          <button type="button" role="tab" aria-selected="true" className="h-[21px] border border-b-0 border-[#e0e0e0] bg-[#fafafa] pr-[10px] pb-[2px] pl-[7px]">
            Geral
          </button>
        </div>
        <div className="flex flex-1 flex-col border border-[#e0e0e0] bg-[#fafafa] px-[6px] py-1">
          <div className="flex-1 bg-[#f0f0f0] px-[3px] pt-[3px]">
            <Group title="Dimensões">
              <Field id="largura" label="Largura" value="5000" />
              <Field id="altura" label="Altura" value="5" />
              <Field id="profundidade" label="Profundidade" value="5000" />
            </Group>
            <Group title="Outras">
              <div className="flex h-5 items-center border-b border-[#909090] pl-[6px]">
                <label htmlFor="camada" className="flex-1">Camada</label>
                <span className="relative">
                  <select id="camada" className="block h-5 w-[100px] appearance-none border border-[#767676] bg-white px-1 outline-none">
                    <option>Piso</option>
                  </select>
                  <Svg box="0 0 10 6" className="pointer-events-none absolute top-2 right-1 h-[6px] w-[10px]">
                    <path d="M1 1l4 4 4-4" stroke="#555" />
                  </Svg>
                </span>
              </div>
            </Group>
          </div>
        </div>
      </div>
    </aside>
  )
}

function ViewTab({ icon, active, children }) {
  return (
    <button
      type="button"
      className={`flex h-[21px] items-center gap-[3px] border px-1 ${active ? 'border-[#0078d7]' : 'border-transparent'}`}
    >
      {icon}
      {children}
    </button>
  )
}

function ViewPane() {
  return (
    <main className="flex min-w-0 flex-1 flex-col border border-[#9c9c9c] bg-[#f0f0f0]">
      <div className="flex flex-1 flex-col pt-[2px] pr-[5px] pb-[5px] pl-[2px]">
        <Scene />
      </div>
      <div className="flex h-[23px] items-center bg-linear-to-b from-[#fdfdfd] to-[#f0f0f0]">
        <div className="flex w-[361px] items-center gap-[5px] border-r border-[#b5b5b5]">
          <ViewTab icon={<RssIcon />}>Connect</ViewTab>
          <ViewTab icon={<GlobeIcon />}>Conexão P</ViewTab>
          <ViewTab icon={<FolderIcon />} active>Projeto</ViewTab>
        </div>
        <div className="ml-[5px] flex">
          <ViewTab icon={<SceneIcon />} active>Ambiente 3D</ViewTab>
        </div>
        <button type="button" aria-label="Fechar vista" className="mr-[10px] ml-auto">
          <Svg box="0 0 8 8" className="h-2 w-2"><path d="M1 1l6 6M7 1L1 7" stroke="#888" strokeWidth="1.800" /></Svg>
        </button>
      </div>
    </main>
  )
}

function StatusButton({ icon, active, children }) {
  return (
    <button
      type="button"
      className={`flex h-5 items-center gap-1 border px-[3px] ${active ? 'border-[#0078d7]' : 'border-transparent'}`}
    >
      {icon}
      {children}
    </button>
  )
}

function StatusBar() {
  return (
    <footer className="flex h-[23px] items-center bg-linear-to-b from-[#fcfcfc] to-[#f0f0f0]">
      <InfoIcon />
      <p className="ml-1">Para aplicar um material em cada letra do texto, arraste o material sobre a letra.</p>
      <div className="ml-auto flex items-center gap-[5px]">
        <StatusButton icon={<GlassesIcon />}>
          Mostrar
          <Caret />
        </StatusButton>
        <StatusButton icon={<CollisionIcon />} active>Colisão</StatusButton>
        <StatusButton icon={<JointIcon />} active>Junções</StatusButton>
        <StatusButton icon={<LowerIcon />}>Auto Rebaixar</StatusButton>
        <button type="button" aria-label="Configurar" className="ml-1"><WrenchIcon /></button>
        <Sep />
        <StatusButton icon={<WarningIcon />}>1</StatusButton>
      </div>
      <Svg box="0 0 12 12" className="mr-px h-3 w-3 self-end">
        <path d="M9 1h2v2H9zM5 5h2v2H5zM9 5h2v2H9zM1 9h2v2H1zM5 9h2v2H5zM9 9h2v2H9z" fill="#a8a8a8" />
      </Svg>
    </footer>
  )
}

function DockTab({ icon, bottom, children }) {
  return (
    <button
      type="button"
      className={`flex h-5 items-center gap-1 border border-[#777] bg-[#f0f0f0] px-1 text-[#6d6d6d] ${bottom ? 'rounded-t-[4px] border-b-0' : 'rounded-b-[4px] border-t-0'}`}
    >
      {icon}
      {children}
    </button>
  )
}

function PointerArrow() {
  return (
    <svg viewBox="0 0 36 80" className="pointer-events-none absolute top-3 left-[372px] z-20 h-20 w-9" fill="none" aria-hidden="true">
      <path d="M18.500 3.500L17.500 62" stroke="#f00" strokeWidth="6.500" strokeLinecap="round" />
      <path d="M3 47C10 52 15 58 17 68 20 58 26 52 33 46.500" stroke="#f00" strokeWidth="5" strokeLinecap="round" strokeLinejoin="round" />
      <path d="M4 50C10 58 13 68 17.500 79 21 68 25 58 33 49L22 52h-9z" fill="#f00" />
    </svg>
  )
}

export default function App() {
  return (
    <div className="relative flex min-h-screen flex-col bg-white pt-[33px] pr-[5px] pb-[11px] pl-[10px] font-[Open_Sans,sans-serif] text-[11px] text-black">
      <PointerArrow />
      <div className="flex flex-1 flex-col overflow-hidden rounded-lg border border-[#a9a9ae] bg-[#e2e2e2]">
        <TitleBar />
        <MenuBar />
        <Toolbar />
        <div className="flex h-[23px] pl-[27px]">
          <div>
            <DockTab icon={<PanelIcon a="#a89468" b="#a89468" />}>Módulos</DockTab>
          </div>
        </div>
        <div className="flex flex-1">
          <nav className="mr-[2px] flex flex-col pt-[5px]">
            <SideTab icon={<ClipIcon />} pad="pb-[2px]">Itens Extras</SideTab>
            <SideTab icon={<GearsIcon />}>Inserção Automática</SideTab>
            <SideTab icon={<ListIcon />}>Lista de Módulos</SideTab>
            <SideTab icon={<LayersIcon turned />} pad="pb-[6px]">Camadas</SideTab>
            <SideTab icon={<RenderIcon />}>Fila de Render - Real Scene 2.0</SideTab>
          </nav>
          <ViewPane />
          <Properties />
        </div>
        <div className="flex h-[23px] items-end pl-[27px]">
          <DockTab icon={<PanelIcon a="#5ba37c" b="#d9606c" />} bottom>Materiais</DockTab>
          <DockTab icon={<SwapIcon />} bottom>Substituir</DockTab>
        </div>
        <StatusBar />
      </div>
    </div>
  )
}
